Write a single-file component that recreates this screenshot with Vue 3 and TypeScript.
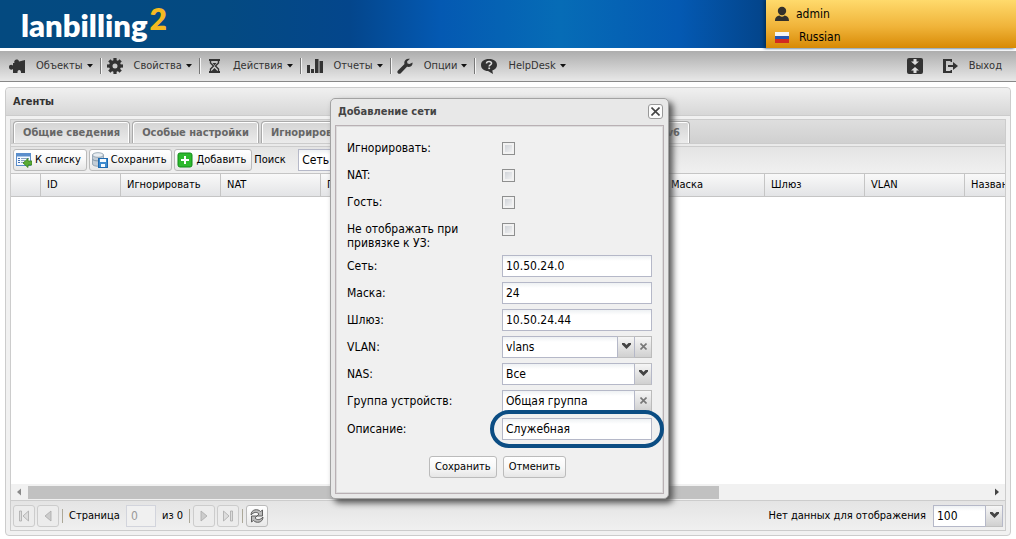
<script setup lang="ts">
import { ref } from 'vue'

interface MenuEntry { id: string; label: string }
const menu: MenuEntry[] = [
  { id: 'objects', label: 'Объекты' },
  { id: 'props', label: 'Свойства' },
  { id: 'actions', label: 'Действия' },
  { id: 'reports', label: 'Отчеты' },
  { id: 'options', label: 'Опции' },
  { id: 'help', label: 'HelpDesk' },
]
const tabs = ['Общие сведения', 'Особые настройки', 'Игнорировать сети', 'Параметры', 'Сети IPv6']
const columns = ['', 'ID', 'Игнорировать', 'NAT', 'Гость', 'Не отображать', 'Сеть', 'Маска', 'Шлюз', 'VLAN', 'Название']
const widths = ['w30', 'w80', 'w100', 'w100', 'w100', 'w144', 'w100', 'w100', 'w100', 'w100', 'w100']
const checks = ['Игнорировать:', 'NAT:', 'Гость:', 'Не отображать при привязке к УЗ:']
const net = ref('10.50.24.0')
const mask = ref('24')
const gateway = ref('10.50.24.44')
const group = ref('Общая группа')
const descr = ref('Служебная')
const searchBy = ref('Сеть')
const teeth = [0, 45, 90, 135, 180, 225, 270, 315]
</script>

<template>
  <div class="app">
    <header class="top">
      <div class="logo">lanbilling<span class="two">2</span></div>
      <div class="user">
        <div class="user-row">
          <svg width="16" height="16" viewBox="0 0 16 16"><circle cx="8" cy="5" r="4.2" fill="#33302b" /><path d="M1 15c0-4 2-5 4.500-5.500Q8 12 10.500 9.500C13 10 15 11 15 15z" fill="#33302b" /></svg>
          <span>admin</span>
        </div>
        <div class="user-row">
          <svg width="16" height="16" viewBox="0 0 16 16"><path d="M1 3h14v4H1z" fill="#f4f4f4" /><path d="M1 7h14v4H1z" fill="#2456b4" /><path d="M1 10h14v4H1z" fill="#d22a20" /></svg>
          <span class="lang">Russian</span>
        </div>
      </div>
    </header>

    <nav class="menubar">
      <button v-for="m in menu" :key="m.id" type="button" class="menu-item">
        <svg class="menu-icon" width="16" height="16" viewBox="0 0 16 16" fill="#333">
          <path v-if="m.id === 'objects'" d="M5.500 5C4 1.500 9.500 0 10 3.500L16 2v13h-4c.5-4-4-4-3.500 0H4v-4C2.500 12.500 0 11.500 0 9s2.500-3 4-1.500V5z" />
          <g v-else-if="m.id === 'props'">
            <rect v-for="t in teeth" :key="t" x="6.400" y="0" width="3.200" height="4" :transform="`rotate(${t} 8 8)`" />
            <path fill-rule="evenodd" d="M8 2a6 6 0 1 0 0 12A6 6 0 0 0 8 2zm0 3.500a2.500 2.500 0 1 1 0 5 2.500 2.500 0 0 1 0-5z" />
          </g>
          <g v-else-if="m.id === 'actions'">
            <path d="M3 1h11v2H3zM3 13h11v2H3z" />
            <path d="M4.500 3v2l3 3-3 3v2M12.500 3v2l-3 3 3 3v2" fill="none" stroke="#333" stroke-width="1.400" />
            <path d="M6.500 5h4l-2 2.500zM5.500 13l3-3 3 3z" />
          </g>
          <path v-else-if="m.id === 'reports'" d="M0 7h3v8H0zM4 11h3v4H4zM8 1h3.500v14H8zM12.500 3H16v12h-3.500z" />
          <path v-else-if="m.id === 'options'" d="M15.500 4.500 12.500 6 10.500 5.500 10 3.500 13 .800C9 0 6.500 3 7.500 6L1 12.500c-2 2 1 4.500 2.800 2.700L10 8.800c3.500.7 6-1.300 5.500-4.300z" />
          <g v-else>
            <path d="M8 1C3 1 0 3.500 0 7s3 6 7 6l5 3-.7-3.500C14.500 11.500 16 9.500 16 7c0-3.500-3-6-8-6z" />
            <path d="M5.500 5.500c0-3 5.500-2.500 5 0C10.300 7 8.200 6.800 8.200 8.500" fill="none" stroke="#ddd" stroke-width="1.600" />
            <path d="M7.300 9.500h1.800v1.600H7.300z" fill="#ddd" />
          </g>
        </svg>
        <span class="menu-label">{{ m.label }}</span>
        <svg class="caret" width="6" height="4" viewBox="0 0 6 4"><path d="M0 0h6L3 3.500z" fill="#111" /></svg>
      </button>
      <span class="grow"></span>
      <button type="button" class="plain" aria-label="Свернуть">
        <svg width="16" height="16" viewBox="0 0 16 16"><rect width="16" height="16" rx="2" fill="#333" /><path d="M6.500 1h3v2.500H12L8 7 4 3.500h2.500zM6.500 15h3v-2.500H12L8 9l-4 3.500h2.500z" fill="#ddd" /></svg>
      </button>
      <button type="button" class="plain exit">
        <svg width="16" height="16" viewBox="0 0 16 16" fill="#333"><path d="M1 1h9v3H8.500V3H4v10h4.500v-1H10v3H1z" /><path d="M6 7h5V4l5 4-5 4V9H6z" /></svg>
        <span>Выход</span>
      </button>
    </nav>

    <main class="panel">
      <h1 class="panel-title">Агенты</h1>
      <div class="panel-body">
        <div class="tabs">
          <button v-for="(t, i) in tabs" :key="t" type="button" class="tab" :class="'tab' + i">{{ t }}</button>
        </div>
        <div class="toolbar">
          <button type="button" class="btn">
            <svg width="16" height="16" viewBox="0 0 16 16"><rect x=".5" y="1.500" width="14" height="12" fill="#f5f9ff" stroke="#5b8ecb" /><path d="M1 2h13v2.500H1z" fill="#5b8ecb" /><path d="M2 6h2v1H2zM2 8h2v1H2zM2 10h2v1H2z" fill="#4470b0" /><path d="M5 6h8v1H5zM5 8h4v1H5zM5 10h3v1H5z" fill="#8aa3c0" /><path d="M7 11l5-4.500V9h4v4h-4v2.500z" fill="#5aab35" stroke="#35801c" stroke-width=".8" /></svg>
            <span>К списку</span>
          </button>
          <button type="button" class="btn">
            <svg width="16" height="16" viewBox="0 0 16 16"><path d="M.5 3v9c0 3 11 3 11 0V3z" fill="#c3cdd6" stroke="#8799a8" stroke-width=".8" /><path d="M.5 7c0 2.500 11 2.500 11 0" fill="none" stroke="#8799a8" /><ellipse cx="6" cy="3" rx="5.500" ry="2.300" fill="#e9eef2" stroke="#8799a8" stroke-width=".8" /><rect x="6.500" y="6.500" width="9" height="9" fill="#3c8bd0" stroke="#1f69ae" /><path d="M8 7h6v3H8zM9 12h4v3H9z" fill="#f4faff" /></svg>
            <span>Сохранить</span>
          </button>
          <button type="button" class="btn">
            <svg width="16" height="16" viewBox="0 0 16 16"><rect x="1" y="1" width="14" height="14" rx="2" fill="#2db92d" stroke="#128a18" /><path d="M7 4h2v3h3v2H9v3H7V9H4V7h3z" fill="#fff" /></svg>
            <span>Добавить</span>
          </button>
          <label class="search-label" for="search">Поиск</label>
          <input id="search" v-model="searchBy" class="field search" type="text" />
        </div>
        <div class="grid">
          <table>
            <thead>
              <tr><th v-for="(c, i) in columns" :key="i" :class="widths[i]" scope="col">{{ c }}</th></tr>
            </thead>
          </table>
        </div>
        <div class="hscroll">
          <svg width="17" height="14" viewBox="0 0 17 14"><path d="M10 3.500v7L6 7z" fill="#8a8a8a" /></svg>
          <div class="track"><div class="thumb"></div></div>
          <svg width="17" height="14" viewBox="0 0 17 14"><path d="M7 3.500v7L11 7z" fill="#444" /></svg>
        </div>
        <div class="paging">
          <button type="button" class="pg off" disabled aria-label="Первая"><svg width="16" height="16" viewBox="0 0 16 16"><path d="M3.500 3h2v10h-2zM12.500 3v10L7 8z" fill="#ddd" stroke="#aaa" stroke-width=".8" /></svg></button>
          <button type="button" class="pg off" disabled aria-label="Назад"><svg width="16" height="16" viewBox="0 0 16 16"><path d="M11 3v10L5 8z" fill="#ccc" stroke="#aaa" stroke-width=".8" /></svg></button>
          <span class="sep"></span>
          <label class="pg-text" for="page">Страница</label>
          <input id="page" class="pg-input" type="text" value="0" disabled />
          <span class="pg-of">из 0</span>
          <span class="sep"></span>
          <button type="button" class="pg off" disabled aria-label="Вперёд"><svg width="16" height="16" viewBox="0 0 16 16"><path d="M5 3v10l6-5z" fill="#ccc" stroke="#aaa" stroke-width=".8" /></svg></button>
          <button type="button" class="pg off" disabled aria-label="Последняя"><svg width="16" height="16" viewBox="0 0 16 16"><path d="M10.500 3h2v10h-2zM3.500 3v10L9 8z" fill="#ddd" stroke="#aaa" stroke-width=".8" /></svg></button>
          <span class="sep"></span>
          <button type="button" class="pg" aria-label="Обновить"><svg width="16" height="16" viewBox="0 0 16 16"><path d="M2 7C2 1 9 .500 11.500 3.500L13.500 2v6H8l2-2C8 3.500 4.500 4 2 7zM14 9c0 6-7 6.500-9.500 3.500L2.500 14V8H8l-2 2c2 2.500 5.500 2 8-1z" fill="#bbb" stroke="#555" stroke-width=".9" /></svg></button>
          <span class="grow"></span>
          <label class="pg-empty" for="size">Нет данных для отображения</label>
          <span class="combo size">
            <select id="size" class="field"><option>100</option></select>
            <span class="arrow"><svg width="9" height="6" viewBox="0 0 9 6"><path d="M0 0h2.500l2 2 2-2H9v1.500L4.500 6 0 1.500z" fill="#444" /></svg></span>
          </span>
        </div>
      </div>
    </main>

    <section class="dialog" role="dialog" aria-labelledby="dlg-title">
      <div class="dlg-head">
        <h2 id="dlg-title">Добавление сети</h2>
        <button type="button" class="close" aria-label="Закрыть"><svg width="9" height="9" viewBox="0 0 9 9"><path d="M.5.5l8 8M8.500.5l-8 8" stroke="#444" stroke-width="1.600" /></svg></button>
      </div>
      <form class="dlg-body" @submit.prevent>
        <div v-for="(c, i) in checks" :key="c" class="row">
          <label :for="'chk' + i">{{ c }}</label>
          <input :id="'chk' + i" type="checkbox" class="check" />
        </div>
        <div class="row entry"><label for="net">Сеть:</label><input id="net" v-model="net" class="field" type="text" /></div>
        <div class="row entry"><label for="mask">Маска:</label><input id="mask" v-model="mask" class="field" type="text" /></div>
        <div class="row entry"><label for="gw">Шлюз:</label><input id="gw" v-model="gateway" class="field" type="text" /></div>
        <div class="row entry">
          <label for="vlan">VLAN:</label>
          <div class="joined">
            <span class="combo">
              <select id="vlan" class="field"><option>vlans</option></select>
              <span class="arrow"><svg width="9" height="6" viewBox="0 0 9 6"><path d="M0 0h2.500l2 2 2-2H9v1.500L4.500 6 0 1.500z" fill="#444" /></svg></span>
            </span>
            <button type="button" class="clear" aria-label="Очистить"><svg width="7" height="7" viewBox="0 0 7 7"><path d="M.5.5l6 6M6.500.5l-6 6" stroke="#777" stroke-width="1.600" /></svg></button>
          </div>
        </div>
        <div class="row entry">
          <label for="nas">NAS:</label>
          <span class="combo">
            <select id="nas" class="field"><option>Все</option></select>
            <span class="arrow"><svg width="9" height="6" viewBox="0 0 9 6"><path d="M0 0h2.500l2 2 2-2H9v1.500L4.500 6 0 1.500z" fill="#444" /></svg></span>
          </span>
        </div>
        <div class="row entry">
          <label for="group">Группа устройств:</label>
          <div class="joined">
            <input id="group" v-model="group" class="field" type="text" />
            <button type="button" class="clear" aria-label="Очистить группу"><svg width="7" height="7" viewBox="0 0 7 7"><path d="M.5.5l6 6M6.500.5l-6 6" stroke="#777" stroke-width="1.600" /></svg></button>
          </div>
        </div>
        <div class="row entry marked"><label for="descr">Описание:</label><input id="descr" v-model="descr" class="field" type="text" /><span class="ring"></span></div>
        <div class="actions">
          <button type="submit" class="btn">Сохранить</button>
          <button type="button" class="btn">Отменить</button>
        </div>
      </form>
    </section>
  </div>
</template>

<style>
html, body, #app { height: 100%; }
body { margin: 0; background: #fff; overflow: hidden; }
</style>

<style scoped>
.app {
  position: relative;
  display: flex;
  flex-direction: column;
  height: 100%;
  font-family: "DejaVu Sans Condensed", "DejaVu Sans", sans-serif;
  font-size: 11px;
  line-height: 14px;
  color: #000;
}
.app *, .app *::before { box-sizing: border-box; }
button, input, select { font: inherit; color: inherit; margin: 0; border-radius: 0; outline: none; }
button { padding: 0; border: 0; background: none; white-space: nowrap; }
svg { display: block; flex: none; }
.grow { flex: 1; }

.top {
  display: flex;
  justify-content: space-between;
  flex: none;
  height: 48px;
  background: linear-gradient(90deg, #044a80 0, #044a82 225px, #04468c 350px, #0459b2 440px, #066cb6 560px, #0459b2 680px, #03448a 765px);
}
.logo {
  padding-left: 21px;
  font-family: Lato, sans-serif;
  font-size: 31px;
  font-weight: 800;
  line-height: 50px;
  color: #fff;
  display: flex;
  gap: 2px;
}
.two { font-size: 30px; line-height: 36px; color: #f5b921; }
.user {
  width: 250px;
  padding: 5px 8px;
  display: flex;
  flex-direction: column;
  gap: 5px;
  font-size: 12px;
  line-height: 18px;
  background: linear-gradient(#ffda6c, #f0b43a 55%, #d88a05);
  box-shadow: -2px 0 3px #02305c;
}
.user-row { display: flex; align-items: center; gap: 6px; height: 18px; }
.lang { padding-left: 3px; }

.menubar {
  display: flex;
  align-items: center;
  flex: none;
  height: 31px;
  margin-top: 3px;
  padding: 0 14px 0 9px;
  background: linear-gradient(#adadad, #e8e8e8);
  border-bottom: 1px solid #888;
  color: #333;
}
.menu-item { display: flex; align-items: center; height: 16px; }
.menu-item:not(:nth-of-type(6)) { border-right: 1px solid #777; box-shadow: 1px 0 #f4f4f4; padding-right: 7px; margin-right: 6px; }
.menu-label { margin: 0 4px 0 11px; line-height: 16px; }
.plain { display: flex; align-items: center; }
.exit { margin-left: 19px; gap: 11px; }

.panel {
  flex: 1;
  display: flex;
  flex-direction: column;
  min-height: 0;
  margin: 5px 5px 3px;
  border: 1px solid #ccc;
  border-radius: 4px;
  background: #f1f1f1;
}
.panel-title {
  margin: 0;
  padding: 0 7px;
  height: 28px;
  line-height: 27px;
  font-size: 11px;
  color: #333;
  border-bottom: 1px solid #ccc;
  border-radius: 4px 4px 0 0;
  background: linear-gradient(#f0f0f0, #d7d7d7);
}
.panel-body {
  flex: 1;
  display: flex;
  flex-direction: column;
  min-height: 0;
  margin: 3px 4px 4px;
  border: 1px solid #ccc;
  background: #fff;
}
.tabs {
  display: flex;
  align-items: flex-end;
  gap: 2px;
  flex: none;
  height: 27px;
  padding: 0 2px 4px;
  background: linear-gradient(#dedede, #d0d0d0 23px, #ccc 23px, #ccc 24px, #eaeaea 24px, #eaeaea 26px, #ccc 26px);
}
.tab {
  height: 22px;
  border: 1px solid #aaa;
  border-bottom: 0;
  border-radius: 4px 4px 0 0;
  box-shadow: inset 1px 1px #fff, inset -1px 0 #fff;
  background: linear-gradient(#d4d4d4, #ebebeb);
  color: #666;
  font-weight: bold;
  text-align: center;
}
.tab0 { width: 117px; }
.tab1 { width: 127px; }
.tab2 { width: 150px; padding-left: 9px; text-align: left; }
.tab3 { width: 150px; }
.tab4 { width: 125px; padding-right: 9px; text-align: right; }
.toolbar {
  display: flex;
  align-items: center;
  gap: 2px;
  flex: none;
  height: 26px;
  padding: 0 2px;
  background: linear-gradient(#e4e4e4, #f0f0f0);
}
.btn {
  display: flex;
  align-items: center;
  gap: 3px;
  height: 22px;
  padding: 0 5px 0 2px;
  border: 1px solid #bbb;
  border-radius: 3px;
  background: linear-gradient(#fff, #f8f8f8 50%, #e6e6e6);
}
.search-label { width: 42px; }
.field {
  width: 150px;
  height: 22px;
  padding: 0 3px;
  border: 1px solid #b5b8c8;
  background: linear-gradient(#eef1f3, #fff 5px);
  font-size: 12px;
  appearance: none;
}
.grid { flex: 1; min-height: 0; overflow: hidden; }
table { table-layout: fixed; width: 1054px; border-collapse: separate; border-spacing: 0; }
th {
  height: 24px;
  padding: 0 6px;
  border: 1px solid #c5c5c5;
  border-left: 0;
  background: linear-gradient(#f9f9f9, #e3e4e6);
  font-weight: normal;
  text-align: left;
  white-space: nowrap;
  overflow: hidden;
}
.w30 { width: 30px; }
.w80 { width: 80px; }
.w100 { width: 100px; }
.w144 { width: 144px; }
.hscroll { display: flex; align-items: center; flex: none; height: 16px; background: #f1f1f1; }
.track { flex: 1; }
.thumb { width: 72%; height: 13px; background: #c1c1c1; }
.paging {
  display: flex;
  align-items: center;
  gap: 2px;
  flex: none;
  height: 30px;
  padding: 0 2px;
  border-top: 1px solid #ccc;
  background: linear-gradient(#e4e4e4, #f0f0f0);
}
.pg {
  display: grid;
  place-items: center;
  width: 22px;
  height: 22px;
  border: 1px solid #bbb;
  border-radius: 3px;
  background: linear-gradient(#fff, #e9e9e9);
}
.pg.off { border-color: #ccc; background: #ececec; }
.sep { width: 1px; height: 14px; margin: 0 1px; background: #aca899; }
.pg-text { width: 58px; padding-left: 3px; }
.pg-input {
  width: 30px;
  height: 22px;
  padding: 0 4px;
  border: 1px solid #d2d4dc;
  background: #f0f0f0;
  color: #999;
  font-size: 12px;
}
.pg-of { width: 28px; padding-left: 4px; }
.pg-empty { margin-right: 5px; }

.combo { display: grid; grid-template-columns: 1fr 18px; width: 150px; }
.combo .field { grid-area: 1 / 1 / 2 / 3; width: 100%; }
.combo.size { width: 70px; }
.arrow {
  grid-area: 1 / 2;
  display: grid;
  place-items: center;
  padding-bottom: 2px;
  border: 1px solid #b5b8c8;
  border-color: #c0c0c0 #b5b8c8;
  background: linear-gradient(#f6f6f6, #d0d0d0);
  pointer-events: none;
}
.joined { display: flex; width: 150px; }
.joined .combo, .joined > .field { flex: 1; width: auto; min-width: 0; }
.clear {
  display: grid;
  place-items: center;
  width: 17px;
  padding-bottom: 2px;
  border: 1px solid #bbb;
  border-left: 0;
  background: linear-gradient(#f6f6f6, #d0d0d0);
}

.dialog {
  position: absolute;
  left: 330px;
  top: 98px;
  width: 339px;
  padding: 0 4px 4px;
  border: 1px solid #a2a2a2;
  border-radius: 5px;
  background: #e8e8e8;
  box-shadow: 4px 4px 6px #555;
}
.dlg-head { display: flex; align-items: flex-start; justify-content: space-between; height: 26px; padding: 5px 1px 0 3px; }
h2 { margin: 0; font-size: 11px; line-height: 16px; color: #444; }
.close {
  display: grid;
  place-items: center;
  width: 15px;
  height: 15px;
  border: 1px solid #999;
  border-radius: 3px;
  background: #fbfbfb;
}
.dlg-body {
  display: flex;
  flex-direction: column;
  gap: 5px;
  padding: 12px 11px 15px;
  border: 1px solid #b9b0b4;
  background: #f0f0f0;
  box-shadow: inset 0 0 0 1px #dcdcdc;
}
.row { display: grid; grid-template-columns: 155px 150px; min-height: 22px; }
.row label { padding: 3px 20px 0 0; font-size: 12px; }
.row.entry label { padding-top: 4px; }
.check {
  appearance: none;
  width: 13px;
  height: 13px;
  margin-top: 4px;
  border: 1px solid #8e8f8f;
  background: linear-gradient(135deg, #c8ccd2, #f8f8f8);
  box-shadow: inset 0 0 0 2px #f2f2f2;
}
.marked { position: relative; margin-top: 1px; }
.ring {
  position: absolute;
  left: 143px;
  top: -8px;
  width: 174px;
  height: 38px;
  border: 4px solid #0b4d83;
  border-radius: 19px;
}
.actions { display: flex; justify-content: flex-start; gap: 6px; padding: 11px 0 0 82px; }
.actions .btn { padding: 0 5px; }
</style>
